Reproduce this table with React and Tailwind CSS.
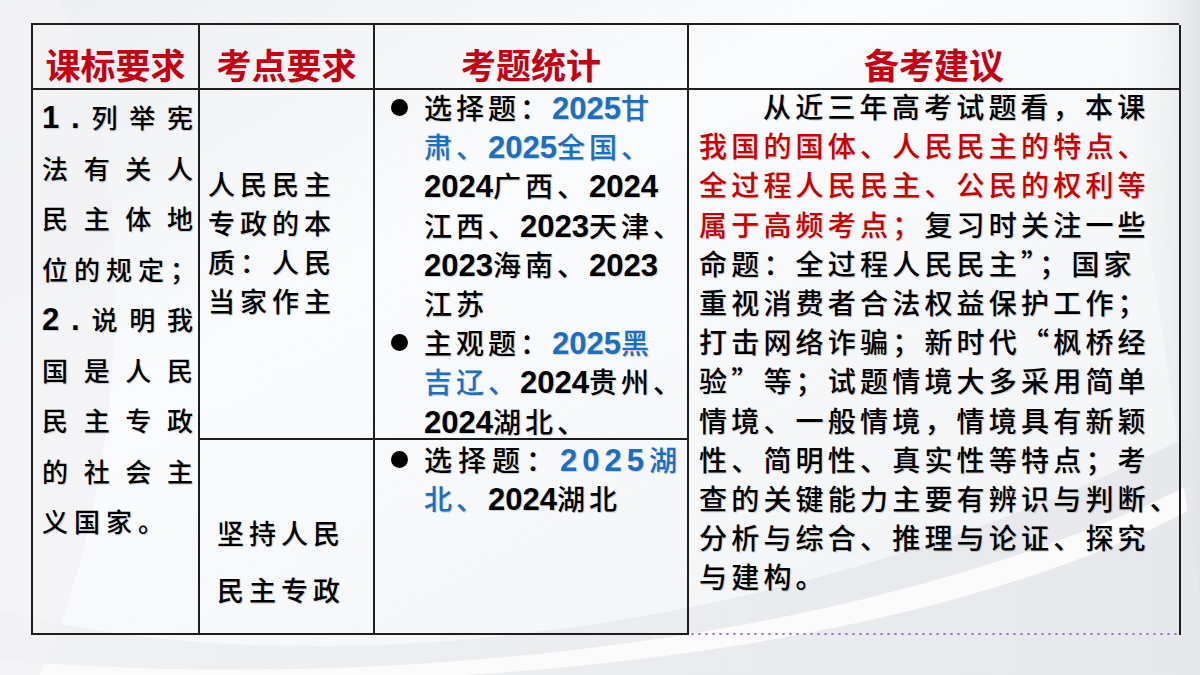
import React from "react";

const cjk = "font-['Noto_Sans_CJK_SC',sans-serif]";
const shadow = "[text-shadow:1px_1px_1px_rgba(0,0,0,0.18)]";

function Num({ children }) {
  return (
    <span className="font-['Liberation_Sans',Arial,sans-serif] font-bold text-[31px] leading-none tracking-normal">
      {children}
    </span>
  );
}

function Blue({ children }) {
  return <span className="text-[#1a6fc2]">{children}</span>;
}

function Red({ children }) {
  return <span className="text-[#c80000]">{children}</span>;
}

function Spread({ items }) {
  return (
    <div className="flex justify-between items-baseline h-[50.5px]">
      {items.map((c, i) => (
        <span key={i}>{c}</span>
      ))}
    </div>
  );
}

function Dot() {
  return (
    <div className="w-[33px] shrink-0 pt-[11px]">
      <div className="w-[17px] h-[17px] rounded-full bg-black" />
    </div>
  );
}

function Background() {
  return (
    <svg className="absolute inset-0 w-full h-full" viewBox="0 0 1200 675" preserveAspectRatio="none">
      <defs>
        <linearGradient id="g1" x1="0" y1="0" x2="1" y2="1">
          <stop offset="0" stopColor="#eceef1" />
          <stop offset="0.35" stopColor="#fafbfc" />
          <stop offset="1" stopColor="#f1f2f4" />
        </linearGradient>
        <linearGradient id="g2" x1="0" y1="0" x2="1" y2="0">
          <stop offset="0" stopColor="#ffffff" stopOpacity="0" />
          <stop offset="1" stopColor="#e2e4e8" />
        </linearGradient>
        <linearGradient id="g3" x1="0" y1="0" x2="1" y2="0">
          <stop offset="0" stopColor="#f0f1f3" />
          <stop offset="1" stopColor="#e6e8eb" />
        </linearGradient>
      </defs>
      <rect width="1200" height="675" fill="url(#g1)" />
      <path d="M0 610 C 300 690, 800 640, 1200 430 L1200 675 L0 675 Z" fill="url(#g3)" />
      <path d="M0 660 C 350 690, 850 655, 1200 480 L1200 505 C 900 665, 400 700, 0 675 Z" fill="#fbfbfc" />
      <path d="M1100 0 C 1150 200, 1170 400, 1200 600 L1200 0 Z" fill="url(#g2)" />
      <path d="M60 0 C 150 200, 120 500, 40 675 L0 675 L0 0 Z" fill="#f2f3f5" opacity="0.8" />
    </svg>
  );
}

export default function App() {
  return (
    <div className={`relative w-[1200px] h-[675px] overflow-hidden bg-[#f6f7f9] ${cjk}`}>
      <Background />
      <div className="relative pl-[31px] pt-[23px]">
        <div className="grid grid-cols-[167px_175px_314px_492px] grid-rows-[65px_350px_195px] border-l-2 border-t-2 border-[#1e1e1e] w-[1148px]">
          {/* header */}
          {["课标要求", "考点要求", "考题统计", "备考建议"].map((t) => (
            <div
              key={t}
              className="flex items-center justify-center pt-[14px] border-r-2 border-b-2 border-[#1e1e1e] text-[35px] font-bold leading-none text-[#c40012]"
            >
              {t}
            </div>
          ))}

          {/* col 1 */}
          <div className={`row-span-2 border-r-2 border-b-2 border-[#1e1e1e] pl-[9px] pr-[5px] pt-[2px] text-[26px] font-medium leading-[50.5px] text-black ${shadow}`}>
            <Spread items={[<Num>1</Num>, <Num>.</Num>, "列", "举", "宪"]} />
            <Spread items={["法", "有", "关", "人"]} />
            <Spread items={["民", "主", "体", "地"]} />
            <div className="h-[50.5px] tracking-[6px] whitespace-nowrap">位的规定；</div>
            <Spread items={[<Num>2</Num>, <Num>.</Num>, "说", "明", "我"]} />
            <Spread items={["国", "是", "人", "民"]} />
            <Spread items={["民", "主", "专", "政"]} />
            <Spread items={["的", "社", "会", "主"]} />
            <div className="h-[50.5px] tracking-[6px] whitespace-nowrap">义国家。</div>
          </div>

          {/* col 2 row 1 */}
          <div className={`border-r-2 border-b-2 border-[#1e1e1e] pl-[8px] pt-[74px] text-[27px] font-medium tracking-[5px] leading-[39px] text-black ${shadow}`}>
            <div>人民民主</div>
            <div>专政的本</div>
            <div>质：人民</div>
            <div>当家作主</div>
          </div>

          {/* col 3 row 1 */}
          <div className={`border-r-2 border-b-2 border-[#1e1e1e] pl-[16px] text-[28px] font-medium tracking-[4px] leading-[39.2px] text-black ${shadow}`}>
            <div className="-mt-[2px]">
              <div className="flex">
                <Dot />
                <div className="whitespace-nowrap [&>div]:h-[39.2px]">
                  <div>选择题：<Blue><Num>2025</Num>甘</Blue></div>
                  <div><Blue>肃、<Num>2025</Num>全国、</Blue></div>
                  <div><Num>2024</Num>广西、<Num>2024</Num></div>
                  <div>江西、<Num>2023</Num>天津、</div>
                  <div><Num>2023</Num>海南、<Num>2023</Num></div>
                  <div>江苏</div>
                </div>
              </div>
              <div className="flex">
                <Dot />
                <div className="whitespace-nowrap [&>div]:h-[39.2px]">
                  <div>主观题：<Blue><Num>2025</Num>黑</Blue></div>
                  <div><Blue>吉辽、</Blue><Num>2024</Num>贵州、</div>
                  <div><Num>2024</Num>湖北、</div>
                </div>
              </div>
            </div>
          </div>

          {/* col 4 */}
          <div className="row-span-2 flex flex-col border-r-2 border-[#1e1e1e]">
            <div className={`flex-1 -mt-[3px] pl-[10px] text-[28px] font-medium tracking-[4.2px] leading-[39.2px] text-black whitespace-nowrap ${shadow}`}>
              <div className="pl-[64px]">从近三年高考试题看，本课</div>
              <div><Red>我国的国体、人民民主的特点、</Red></div>
              <div><Red>全过程人民民主、公民的权利等</Red></div>
              <div><Red>属于高频考点；</Red>复习时关注一些</div>
              <div>命题：全过程人民民主”；国家</div>
              <div>重视消费者合法权益保护工作；</div>
              <div>打击网络诈骗；新时代“枫桥经</div>
              <div>验”等；试题情境大多采用简单</div>
              <div>情境、一般情境，情境具有新颖</div>
              <div>性、简明性、真实性等特点；考</div>
              <div>查的关键能力主要有辨识与判断、</div>
              <div>分析与综合、推理与论证、探究</div>
              <div>与建构。</div>
            </div>
            <div className="h-[2px] bg-[radial-gradient(circle,#9b6fd0_1px,transparent_1.3px)] bg-[length:7px_2px]" />
          </div>

          {/* col 2 row 2 */}
          <div className={`border-r-2 border-b-2 border-[#1e1e1e] pl-[17px] pt-[64px] text-[27px] font-medium tracking-[5px] leading-[57px] text-black ${shadow}`}>
            <div>坚持人民</div>
            <div>民主专政</div>
          </div>

          {/* col 3 row 2 */}
          <div className={`border-r-2 border-b-2 border-[#1e1e1e] pl-[16px] text-[28px] font-medium tracking-[4px] leading-[39.2px] text-black ${shadow}`}>
            <div className="flex">
              <Dot />
              <div className="whitespace-nowrap [&>div]:h-[39.2px]">
                <div className="tracking-[6px]">选择题：<Blue><span className="[&>span]:tracking-[5px]"><Num>2025</Num></span>湖</Blue></div>
                <div><Blue>北、</Blue><Num>2024</Num>湖北</div>
              </div>
            </div>
          </div>
        </div>
      </div>
    </div>
  );
}
